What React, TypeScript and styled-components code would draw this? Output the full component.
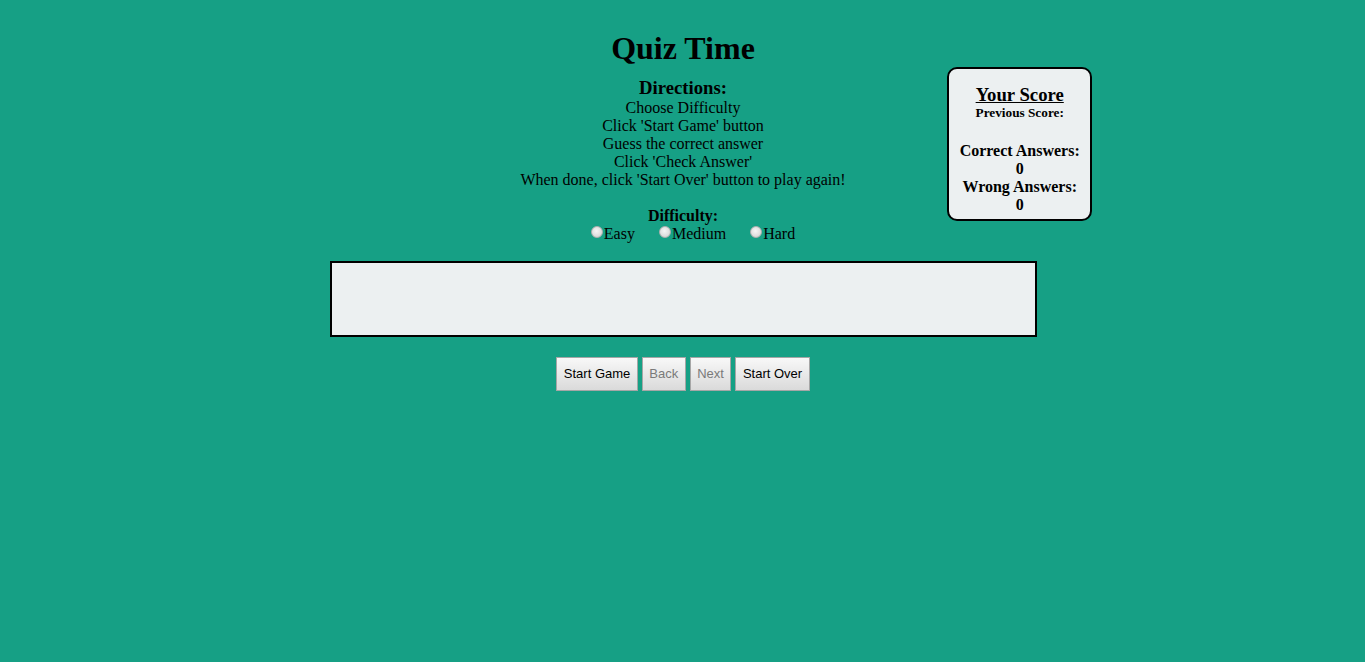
import React from "react";
import styled, { createGlobalStyle } from "styled-components";

const GlobalStyle = createGlobalStyle`
  html, body {
    margin: 0;
    padding: 0;
    background: #16a085;
  }
  body {
    font-family: "Liberation Serif", "Times New Roman", serif;
    color: #000;
  }
`;

const Page = styled.main`
  min-height: 100vh;
  padding: 30px 0 0 1px;
  box-sizing: border-box;
  background: #16a085;
`;

const Title = styled.h1`
  margin: 0;
  font-size: 32px;
  line-height: 37px;
  font-weight: bold;
  text-align: center;
`;

const Intro = styled.section`
  display: grid;
  grid-template-columns: 1fr 145px 20%;
`;

const Directions = styled.div`
  grid-column: 1 / -1;
  grid-row: 1;
  padding-top: 10px;
  text-align: center;
  font-size: 16px;
  line-height: 18px;
`;

const DirectionsHeading = styled.h3`
  margin: 0;
  font-size: 18.72px;
  line-height: 22px;
  font-weight: bold;
`;

const Step = styled.div``;

const DifficultyLabel = styled.div<{ $gap?: number }>`
  margin-top: ${(p) => p.$gap ?? 0}px;
  font-weight: bold;
`;

const RadioRow = styled.div`
  display: flex;
  justify-content: center;
  align-items: flex-start;
  gap: 24px;
  padding-left: 20px;
  height: 18px;
`;

const Option = styled.label`
  display: inline-flex;
  align-items: flex-start;
  cursor: pointer;
`;

const Radio = styled.input`
  appearance: none;
  -webkit-appearance: none;
  width: 12px;
  height: 12px;
  margin: 1px 1px 0 0;
  border-radius: 50%;
  border: 1px solid #b0b0b0;
  box-sizing: border-box;
  background: radial-gradient(circle at 45% 40%, #f6f6f6 0%, #dedede 60%, #c6c6c6 100%);
`;

const ScoreCard = styled.aside`
  grid-column: 2;
  grid-row: 1;
  align-self: start;
  box-sizing: border-box;
  width: 145px;
  border: 2px solid #000;
  border-radius: 10px;
  background: #ecf0f1;
  padding: 15px 0 5px;
  text-align: center;
  font-weight: bold;
  font-size: 16px;
  line-height: 18px;
`;

const ScoreTitle = styled.h3`
  margin: 0;
  font-size: 18.72px;
  line-height: 22px;
  text-decoration: underline;
`;

const PreviousScore = styled.h5`
  margin: 0 0 22px;
  font-size: 13.28px;
  line-height: 14px;
`;

const ScoreLine = styled.div``;

const QuizBox = styled.section`
  box-sizing: border-box;
  width: 707px;
  height: 76px;
  margin: 18px auto 0;
  border: 2px solid #000;
  background: #ecf0f1;
`;

const ButtonRow = styled.div`
  display: flex;
  justify-content: center;
  gap: 4px;
  margin-top: 20px;
`;

const Button = styled.button`
  font-family: "Liberation Sans", Arial, sans-serif;
  font-size: 13px;
  line-height: 16px;
  padding: 8px 6.5px;
  border: 1px solid #a6a6a6;
  border-radius: 0;
  background: linear-gradient(#f8f8f8, #dadada);
  color: #000;
  cursor: pointer;

  &:disabled {
    color: #7a7a7a;
    cursor: default;
  }
`;

const steps = [
  "Choose Difficulty",
  "Click 'Start Game' button",
  "Guess the correct answer",
  "Click 'Check Answer'",
  "When done, click 'Start Over' button to play again!",
];

const levels = ["Easy", "Medium", "Hard"];

export default function App() {
  return (
    <>
      <GlobalStyle />
      <Page>
        <Title>Quiz Time</Title>
        <Intro>
          <Directions>
            <DirectionsHeading>Directions:</DirectionsHeading>
            {steps.map((s) => (
              <Step key={s}>{s}</Step>
            ))}
            <DifficultyLabel $gap={18}>Difficulty:</DifficultyLabel>
            <RadioRow>
              {levels.map((l) => (
                <Option key={l}>
                  <Radio type="radio" name="difficulty" value={l} />
                  {l}
                </Option>
              ))}
            </RadioRow>
          </Directions>
          <ScoreCard>
            <ScoreTitle>Your Score</ScoreTitle>
            <PreviousScore>Previous Score:</PreviousScore>
            <ScoreLine>Correct Answers:</ScoreLine>
            <ScoreLine>0</ScoreLine>
            <ScoreLine>Wrong Answers:</ScoreLine>
            <ScoreLine>0</ScoreLine>
          </ScoreCard>
        </Intro>
        <QuizBox />
        <ButtonRow>
          <Button>Start Game</Button>
          <Button disabled>Back</Button>
          <Button disabled>Next</Button>
          <Button>Start Over</Button>
        </ButtonRow>
      </Page>
    </>
  );
}
